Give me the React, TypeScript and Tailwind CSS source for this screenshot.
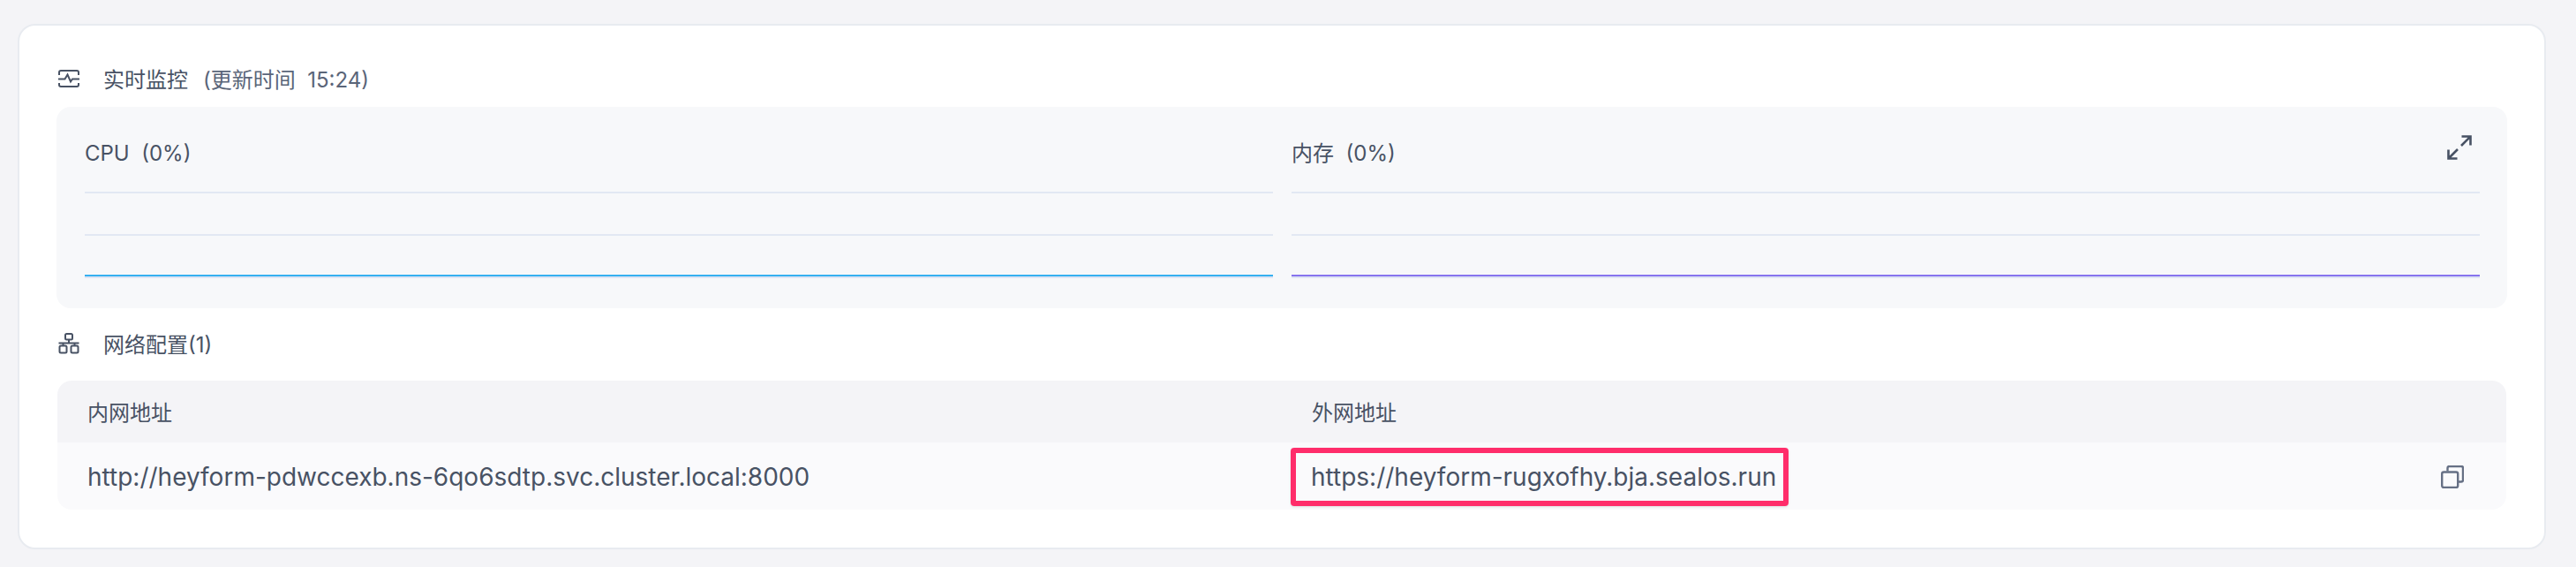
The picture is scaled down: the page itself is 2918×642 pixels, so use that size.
const font = "font-['Inter','Noto_Sans_CJK_SC',sans-serif]";

const MonitorIcon = () => (
  <svg width="24" height="20" viewBox="0 0 24 20" fill="none" stroke="#485264" strokeWidth="2" className="shrink-0">
    <path d="M1 6V3a2 2 0 0 1 2-2h18a2 2 0 0 1 2 2v3" />
    <path d="M0 10.5h7.5l3-5 3.5 8 2-3h8" />
    <path d="M1 15v2a2 2 0 0 0 2 2h18a2 2 0 0 0 2-2v-2" />
  </svg>
);

const NetworkIcon = () => (
  <svg width="24" height="24" viewBox="0 0 24 24" fill="none" stroke="#485264" strokeWidth="2" className="shrink-0">
    <rect x="8" y="1" width="8" height="6.5" rx="1.5" />
    <path d="M12 7.5v4M0.5 11.5h23M5.5 11.5v3M18.5 11.5v3" />
    <rect x="1.5" y="14.5" width="8" height="8" rx="1.5" />
    <rect x="14.5" y="14.5" width="8" height="8" rx="1.5" />
  </svg>
);

const ExpandIcon = () => (
  <svg width="28" height="28" viewBox="0 0 28 28" fill="none" stroke="#485264" strokeWidth="2.6">
    <path d="M16.5 1.5h10v10M26 2l-10 10" />
    <path d="M1.5 16.5v10h10M2 26l10-10" />
  </svg>
);

const CopyIcon = () => (
  <svg width="26" height="26" viewBox="0 0 26 26" fill="none" stroke="#667085" strokeWidth="2.4" className="shrink-0">
    <path d="M7.5 6.5V3a2 2 0 0 1 2-2H23a2 2 0 0 1 2 2v13.5a2 2 0 0 1-2 2h-3" />
    <rect x="1.2" y="7.5" width="18" height="17.5" rx="2" />
  </svg>
);

const Chart = ({ label, lineClass }: { label: string; lineClass: string }) => (
  <div className="flex flex-col">
    <div className="flex h-[32px] items-center whitespace-pre pt-[3px] text-[24px] text-[#485264]">{label}</div>
    <div className="mt-[29px] h-[2px] bg-[#E2E8F3]" />
    <div className="mt-[46px] h-[2px] bg-[#E2E8F3]" />
    <div className={`mt-[44px] h-[2px] ${lineClass}`} />
    <div className="h-[2px] bg-[#DEE4F3]" />
  </div>
);

export default function App() {
  return (
    <div className={`h-[642px] w-full bg-[#F4F4F7] pl-[20px] pr-[34px] pt-[27px] ${font}`}>
      <div className="h-[595px] rounded-[20px] border-2 border-[#E8EBF0] bg-white px-[42px] pt-[48px]">
        <div className="mb-[20px] flex h-[24px] items-center pl-[2px]">
          <MonitorIcon />
          <span className="ml-[27px] pt-[3px] text-[24px] text-[#485264]">实时监控</span>
          <span className="ml-[17px] whitespace-pre pt-[3px] text-[24px] text-[#5A6579]">(更新时间  15:24)</span>
        </div>

        <div className="relative h-[228px] rounded-[16px] bg-[#F7F8FA] pl-[32px] pr-[31px] pt-[35px]">
          <div className="grid grid-cols-2 gap-[21px]">
            <Chart label="CPU  (0%)" lineClass="bg-[#36B0F0]" />
            <Chart label="内存  (0%)" lineClass="bg-[#8774EE]" />
          </div>
          <div className="absolute right-[40px] top-[32px]">
            <ExpandIcon />
          </div>
        </div>

        <div className="mb-[30px] mt-[28px] flex h-[24px] items-center pl-[2px]">
          <NetworkIcon />
          <span className="ml-[27px] pt-[3px] text-[24px] text-[#485264]">网络配置(1)</span>
        </div>

        <div className="mx-px overflow-hidden rounded-[16px]">
          <div className="grid h-[70px] grid-cols-[1397px_1fr] items-center bg-[#F4F4F7] pt-[3px] text-[24px] text-[#485264]">
            <div className="pl-[34px]">内网地址</div>
            <div className="pl-[24px]">外网地址</div>
          </div>
          <div className="grid h-[76px] grid-cols-[1397px_1fr] items-center bg-[#FAFAFC] pt-[2px] text-[28px] text-[#485264]">
            <div className="pl-[34px]">http://heyform-pdwccexb.ns-6qo6sdtp.svc.cluster.local:8000</div>
            <div className="flex items-center justify-between pr-[48px]">
              <div className="flex h-[66px] w-[564px] items-center whitespace-nowrap rounded-[4px] border-[6px] border-[#FF2D6B] pl-[17px] shadow-sm">
                https://heyform-rugxofhy.bja.sealos.run
              </div>
              <CopyIcon />
            </div>
          </div>
        </div>
      </div>
    </div>
  );
}
